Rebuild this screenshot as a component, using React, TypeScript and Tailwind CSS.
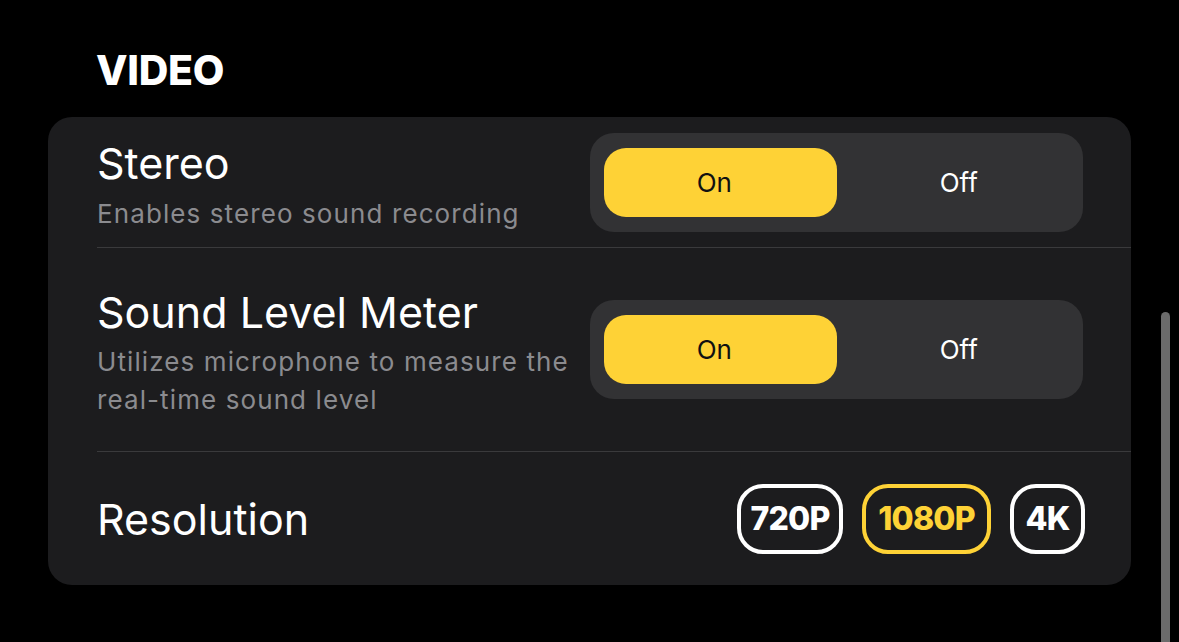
import React, { useState } from 'react';

const font = { fontFamily: 'Inter, "Noto Sans", sans-serif' };

function Segmented({ value, onChange }: { value: boolean; onChange: (v: boolean) => void }) {
  return (
    <div className="flex h-[99px] w-[493px] shrink-0 items-center rounded-[24px] bg-[#323234] px-[14px]">
      <button
        onClick={() => onChange(true)}
        className={`flex h-[69px] flex-1 items-center justify-center rounded-[22px] pr-[12px] text-[26px] ${
          value ? 'bg-[#fed236] text-[#111]' : 'text-white'
        }`}
      >
        On
      </button>
      <button
        onClick={() => onChange(false)}
        className={`flex h-[69px] flex-1 items-center justify-center rounded-[22px] pl-[12px] text-[26px] ${
          !value ? 'bg-[#fed236] text-[#111]' : 'text-white'
        }`}
      >
        Off
      </button>
    </div>
  );
}

export default function App() {
  const [stereo, setStereo] = useState(true);
  const [meter, setMeter] = useState(true);
  const [res, setRes] = useState('1080P');

  const resolutions = [
    { id: '720P', w: 'w-[106px]' },
    { id: '1080P', w: 'w-[129px]' },
    { id: '4K', w: 'w-[75px]' },
  ];

  return (
    <div className="relative h-[642px] w-[1179px] overflow-hidden bg-black text-white" style={font}>
      <div className="pl-[48px] pt-[50px]">
        <h2 className="mb-[27px] ml-[48px] h-[40px] text-[41px] font-extrabold leading-[40px] tracking-[-0.3px]">VIDEO</h2>

        <div className="w-[1083px] rounded-[24px] bg-[#1c1c1e] pl-[49px]">
          {/* Stereo */}
          <div className="flex h-[131px] items-center justify-between border-b border-[#3a3a3c] pr-[48px]">
            <div className="pt-[6px]">
              <div className="text-[43px] leading-[50px]">Stereo</div>
              <div className="mt-[7px] text-[26px] leading-[38px] tracking-[1.1px] text-[#8b8b8f]">Enables stereo sound recording</div>
            </div>
            <Segmented value={stereo} onChange={setStereo} />
          </div>

          {/* Sound Level Meter */}
          <div className="flex h-[204px] items-center justify-between border-b border-[#3a3a3c] pr-[48px]">
            <div className="pt-[6px]">
              <div className="text-[43px] leading-[50px]">Sound Level Meter</div>
              <div className="mt-[6px] whitespace-nowrap text-[26px] leading-[38px] tracking-[1.1px] text-[#8b8b8f]">
                Utilizes microphone to measure the
                <br />
                real-time sound level
              </div>
            </div>
            <Segmented value={meter} onChange={setMeter} />
          </div>

          {/* Resolution */}
          <div className="flex h-[133px] items-center justify-between pr-[46px]">
            <div className="text-[43px] leading-[50px]">Resolution</div>
            <div className="flex items-center gap-[19px]">
              {resolutions.map((r) => (
                <button
                  key={r.id}
                  onClick={() => setRes(r.id)}
                  className={`flex h-[70px] ${r.w} items-center justify-center rounded-[26px] border-[4px] text-[32px] font-extrabold tracking-[-0.8px] ${
                    res === r.id ? 'border-[#fed236] text-[#fed236]' : 'border-white text-white'
                  }`}
                >
                  {r.id}
                </button>
              ))}
            </div>
          </div>
        </div>
      </div>

      {/* scrollbar */}
      <div className="absolute left-[1161px] top-[312px] h-[340px] w-[9px] rounded-t-full bg-[#6b6b6b]" />
    </div>
  );
}
